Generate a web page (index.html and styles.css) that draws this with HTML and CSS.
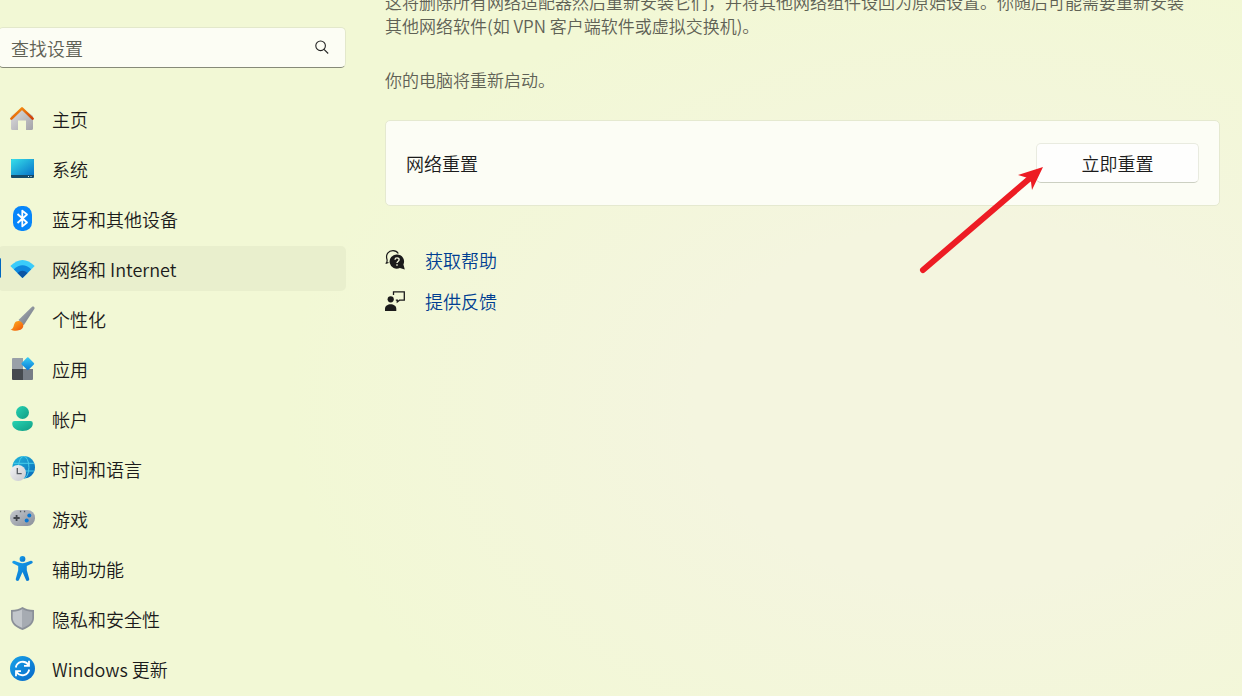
FILE: index.html
```html
<!DOCTYPE html>
<html lang="zh-CN">
<head>
<meta charset="utf-8">
<meta name="viewport" content="width=device-width, initial-scale=1">
<title>设置 - 网络重置</title>
<link rel="stylesheet" href="styles.css">
</head>
<body>
<div class="shell">
  <aside class="sidebar">
    <form class="search" role="search">
      <input class="search-input" type="text" placeholder="查找设置" aria-label="查找设置">
      <button class="search-button" type="button" aria-label="搜索">
        <svg width="16" height="16" viewBox="0 0 16 16" fill="none" stroke="#222" stroke-width="1.1"><circle cx="6.6" cy="6.8" r="4.8"/><path d="M10 10.300 14.200 14.500"/></svg>
      </button>
    </form>
    <nav class="nav" aria-label="设置">
      <a class="nav-item" href="#home">
        <svg class="nav-icon" viewBox="0 0 25 25">
          <defs><linearGradient id="wall" x1="0" y1="0" x2="1" y2="1"><stop offset="0" stop-color="#e0e0e2"/><stop offset="1" stop-color="#a3a3a8"/></linearGradient><linearGradient id="roof" x1="0" y1="0" x2="1" y2="1"><stop offset="0" stop-color="#fb9a10"/><stop offset="1" stop-color="#cf3f07"/></linearGradient></defs>
          <path fill="url(#wall)" d="M1 10 12 2l11 8v12.500a1.500 1.500 0 0 1-1.500 1.500H16v-9.500H8V24H2.500A1.500 1.500 0 0 1 1 22.500Z"/>
          <path fill="none" stroke="url(#roof)" stroke-width="2.600" stroke-linecap="round" stroke-linejoin="round" d="M1.400 12.600 12 2.400l10.600 10.200"/>
        </svg><span>主页</span></a>
      <a class="nav-item" href="#system">
        <svg class="nav-icon" viewBox="0 0 25 25">
          <defs><linearGradient id="screen" x1="0" y1="0" x2="1" y2="1"><stop offset="0" stop-color="#36e0ea"/><stop offset="1" stop-color="#0873c9"/></linearGradient></defs>
          <rect x="1" y="3" width="23" height="19" rx="1" fill="#134b6b"/><path d="M1 4a1 1 0 0 1 1-1h21a1 1 0 0 1 1 1v15H1Z" fill="url(#screen)"/><path d="M18 20.500h1M20.500 20.500h1" stroke="#d7ecf5"/>
        </svg><span>系统</span></a>
      <a class="nav-item" href="#bluetooth">
        <svg class="nav-icon" viewBox="0 0 25 25">
          <rect x="3" width="19" height="25" rx="8.500" fill="#0786fa"/><path fill="none" stroke="#fff" stroke-width="1.800" stroke-linejoin="round" d="m7.500 8 9.500 8.500-4.700 3.900V4.600L17 8.500 7.500 17"/>
        </svg><span>蓝牙和其他设备</span></a>
      <a class="nav-item active" href="#network" aria-current="page">
        <svg class="nav-icon" viewBox="0 0 25 25">
          <path fill="#3acbfa" d="M.300 10Q12.500-2 24.700 10L12.500 22Z"/><path fill="#0e87dd" d="M3.800 13.300q8.700-8 17.400 0L12.500 22Z"/><path fill="#0b55a4" d="M7.500 17q5-4.500 10 0l-5 5Z"/>
        </svg><span>网络和 Internet</span></a>
      <a class="nav-item" href="#personalization">
        <svg class="nav-icon" viewBox="0 0 25 25">
          <defs><linearGradient id="handle" x1="0" y1="0" x2="1" y2="1"><stop offset="0" stop-color="#abb1ba"/><stop offset="1" stop-color="#6d747e"/></linearGradient><linearGradient id="brush" x1="0" y1="0" x2="1" y2="1"><stop offset="0" stop-color="#ffb51f"/><stop offset="1" stop-color="#ef5208"/></linearGradient></defs>
          <path fill="url(#handle)" d="M8.500 14 21.800 1c1.500-1.200 3.500.200 2.500 2.100L13.700 19.200Z"/><path fill="url(#brush)" d="M4.500 17.500c1.500-3 5.400-3.200 7.800-.600 2.200 2.800.600 6.200-2.800 7.200-3 .900-6.600.700-9-.700 3.200-.300 2.800-3.400 4-5.900Z"/>
        </svg><span>个性化</span></a>
      <a class="nav-item" href="#apps">
        <svg class="nav-icon" viewBox="0 0 25 25">
          <defs><linearGradient id="tile" x1="0" y1="0" x2="1" y2="1"><stop offset="0" stop-color="#3ad0f6"/><stop offset="1" stop-color="#0878d6"/></linearGradient></defs>
          <path fill="#99a0a8" d="M3 2h10v11H2V3a1 1 0 0 1 1-1Z"/><path fill="#45494f" d="M2 13h11v11H3a1 1 0 0 1-1-1Z"/><path fill="#777d86" d="M13 13h10v10a1 1 0 0 1-1 1h-9Z"/><rect x="13" y="2.900" width="9.600" height="9.600" rx="1" transform="rotate(45 17.800 7.700)" fill="url(#tile)"/>
        </svg><span>应用</span></a>
      <a class="nav-item" href="#accounts">
        <svg class="nav-icon" viewBox="0 0 25 25">
          <defs><linearGradient id="person" x1="0" y1="0" x2="1" y2="1"><stop offset="0" stop-color="#27d3b3"/><stop offset="1" stop-color="#109c83"/></linearGradient></defs>
          <circle cx="12.500" cy="6.500" r="6.500" fill="url(#person)"/><path fill="url(#person)" d="M4.500 15h16a2.300 2.300 0 0 1 2.300 2.300C22.800 22 18.500 25 12.500 25S2.200 22 2.200 17.300A2.300 2.300 0 0 1 4.500 15Z"/>
        </svg><span>帐户</span></a>
      <a class="nav-item" href="#time">
        <svg class="nav-icon" viewBox="0 0 25 25">
          <defs><linearGradient id="globe" x1="0" y1="0" x2="1" y2="1"><stop offset="0" stop-color="#22b9dc"/><stop offset="1" stop-color="#0867b9"/></linearGradient><linearGradient id="dial" x1="0" y1="0" x2="1" y2="1"><stop offset="0" stop-color="#f5f5f7"/><stop offset="1" stop-color="#c6c8cd"/></linearGradient></defs>
          <circle cx="13.700" cy="11.300" r="11.300" fill="url(#globe)"/><g fill="none" stroke="#49cdea" stroke-width="1"><ellipse cx="13.700" cy="11.300" rx="5.200" ry="11"/><path d="M3.500 7.300h20.400M3.500 15h20.400"/></g><circle cx="8" cy="17" r="8" fill="url(#dial)"/><path fill="none" stroke="#555b62" stroke-width="1.300" d="M7.300 12v5.700h4.400"/>
        </svg><span>时间和语言</span></a>
      <a class="nav-item" href="#gaming">
        <svg class="nav-icon" viewBox="0 0 25 25">
          <defs><linearGradient id="pad" x1="0" y1="0" x2="1" y2="1"><stop offset="0" stop-color="#c5c8ce"/><stop offset="1" stop-color="#898f99"/></linearGradient></defs>
          <rect y="4" width="25" height="16" rx="7.500" fill="url(#pad)"/><path stroke="#42464c" stroke-width="1.800" d="M3.500 12h6.200M6.600 8.900v6.200"/><circle cx="19.300" cy="9.500" r="2" fill="#0876d3"/><circle cx="16.700" cy="14.500" r="2" fill="#0876d3"/><path stroke="#555b63" stroke-width="1.300" d="M9.900 5.500h1.300M13.900 5.500h1.300"/>
        </svg><span>游戏</span></a>
      <a class="nav-item" href="#accessibility">
        <svg class="nav-icon" viewBox="0 0 25 25">
          <defs><linearGradient id="figure" x1="0" y1="0" x2="1" y2="1"><stop offset="0" stop-color="#19a0ec"/><stop offset="1" stop-color="#0672cc"/></linearGradient></defs>
          <g fill="url(#figure)"><circle cx="12.500" cy="2.900" r="2.900"/><path d="M4.300 4.800 9 6.600q3.500 1.300 7 0l4.700-1.800c2-.500 2.800 2 1.100 2.800l-5 2.400v4.200l2.400 8.500c.500 2.200-2.500 3.100-3.300 1l-3.400-7.600-3.400 7.600c-.800 2.100-3.800 1.200-3.300-1l2.400-8.500V10l-5-2.400c-1.700-.800-.900-3.300 1.100-2.800Z"/></g>
        </svg><span>辅助功能</span></a>
      <a class="nav-item" href="#privacy">
        <svg class="nav-icon" viewBox="0 0 25 25">
          <path fill="#8b9098" d="M12.500 1c3 2 6.500 3 11.500 3v8c0 5.500-4.500 9.500-11.500 12C5.500 21.500 1 17.500 1 12V4c5 0 8.500-1 11.500-3Z"/><path fill="#c2c6cb" d="M12.500 3C9.500 4.800 6.500 5.600 2.700 5.800V12c0 4.300 3.600 7.600 9.800 10Z"/><path fill="#a6abb2" d="M12.500 3c3 1.800 6 2.600 9.800 2.800V12c0 4.300-3.600 7.600-9.800 10Z"/>
        </svg><span>隐私和安全性</span></a>
      <a class="nav-item" href="#update">
        <svg class="nav-icon" viewBox="0 0 25 25">
          <defs><linearGradient id="disc" x1="0" y1="0" x2="1" y2="1"><stop offset="0" stop-color="#18a3e8"/><stop offset="1" stop-color="#0868c9"/></linearGradient></defs>
          <circle cx="12.500" cy="12.500" r="12.500" fill="url(#disc)"/><path fill="none" stroke="#fff" stroke-width="1.800" d="M5.800 11.500a6.900 6.900 0 0 1 12.400-2.800M19.200 13.500a6.900 6.900 0 0 1-12.400 2.800M19 4.800v5h-5M6 20.200v-5h5"/>
        </svg><span>Windows 更新</span></a>
    </nav>
  </aside>
  <main class="content">
    <div class="description">
      <p>这将删除所有网络适配器然后重新安装它们，并将其他网络组件设回为原始设置。你随后可能需要重新安装<br>其他网络软件(如 VPN 客户端软件或虚拟交换机)。</p>
      <p>你的电脑将重新启动。</p>
    </div>
    <section class="card">
      <h2 class="card-title">网络重置</h2>
      <div class="card-action">
        <button class="reset-button" type="button">立即重置</button>
        <svg class="arrow" width="130" height="112" viewBox="0 0 130 112" fill="#ed1c24" aria-hidden="true"><path d="M8 106 114 15" stroke="#ed1c24" stroke-width="6" stroke-linecap="round"/><path d="M128 3 103 11 113 14 116 18 117 26Z"/></svg>
      </div>
    </section>
    <div class="links">
      <a class="link" href="#help">
        <svg class="link-icon" viewBox="0 0 20 20"><path fill="none" stroke="#1b1b1b" stroke-width="1.200" d="M1.500 13q.900-2 .500-3.500C.400 4.500 3.500.700 8 .700c2.200 0 4.200 1 5.300 2.800M3.500 12.500.600 13.400"/><path fill="#1b1b1b" d="M12 4.500a7 7 0 0 1 6.400 10l1.400 4.900-4.900-1.500A7.100 7.100 0 1 1 12 4.500Z"/><path fill="none" stroke="#f4f7dc" stroke-width="1.400" d="M10 9.700c.200-2.600 4.200-2.300 4.100 0 0 1.500-2.100 1.500-2.100 3.400M12 14.200v1.500"/></svg>
        <span>获取帮助</span></a>
      <a class="link" href="#feedback">
        <svg class="link-icon" viewBox="0 0 20 20"><circle cx="5.700" cy="8.300" r="3.100" fill="#1b1b1b"/><path fill="#1b1b1b" d="M0 20v-2.200c0-6.200 11.300-6.200 11.300 0V20Z"/><path fill="none" stroke="#1b1b1b" stroke-width="1.300" d="M8.500 4V.800h10.800v8.400h-4.800L12.300 11V9.200h-1.500"/></svg>
        <span>提供反馈</span></a>
    </div>
  </main>
</div>
</body>
</html>
```
FILE: styles.css
```css
* { box-sizing: border-box; }

body {
  margin: 0;
  min-height: 100vh;
  overflow: hidden;
  color: #1b1b1b;
  font-family: "Noto Sans CJK SC", "Noto Sans", sans-serif;
  font-size: 18px;
  font-weight: 350;
  line-height: 24px;
  background:
    radial-gradient(ellipse 55% 65% at 78% 58%, #f4f5df 0%, #f4f5df 40%, rgba(244, 245, 223, 0) 100%),
    #f2f8d5;
}

a { color: inherit; text-decoration: none; }

.shell { display: flex; gap: 39px; }

.sidebar {
  flex: 0 0 348px;
  margin-left: -2px;
  padding-top: 27px;
}

.search { position: relative; display: flex; }

.search-input {
  width: 100%;
  height: 41px;
  padding: 0 48px 0 12px;
  border: 1px solid #e3e8cb;
  border-bottom-color: #868a78;
  border-radius: 5px;
  background: #fcfdf4;
  color: #1b1b1b;
  font: inherit;
  outline: none;
}

.search-input::placeholder { color: #5f6155; opacity: 1; }

.search-button {
  position: absolute;
  top: 4px;
  right: 8px;
  display: grid;
  place-items: center;
  width: 32px;
  height: 32px;
  padding: 0;
  border: 0;
  background: transparent;
}

.nav {
  display: grid;
  gap: 5px;
  padding-top: 28px;
}

.nav-item {
  position: relative;
  display: flex;
  align-items: center;
  gap: 17px;
  height: 45px;
  padding: 0 12px;
  border-radius: 5px;
}

.nav-item.active { background: #e9efcd; }

.nav-item.active::before {
  content: "";
  position: absolute;
  top: 12px;
  left: 0;
  width: 3px;
  height: 20px;
  border-radius: 2px;
  background: #0067c0;
}

.nav-icon { flex: none; width: 25px; height: 25px; }

.content {
  flex: 1;
  min-width: 0;
  margin-top: -10px;
  padding-right: 22px;
}

.description {
  display: grid;
  gap: 30px;
  padding-bottom: 28px;
  color: #5f6155;
  font-size: 17px;
}

.description p { margin: 0; }

.card {
  display: flex;
  align-items: center;
  justify-content: space-between;
  min-height: 86px;
  padding: 20px;
  border: 1px solid #e5e9d0;
  border-radius: 5px;
  background: #fcfdf5;
}

.card-title { margin: 0; font-size: 18px; font-weight: 350; }

.card-action { position: relative; }

.reset-button {
  display: block;
  min-width: 163px;
  height: 40px;
  border: 1px solid #e9ebe0;
  border-bottom-color: #ccd0c2;
  border-radius: 5px;
  background: #fefefd;
  color: #1b1b1b;
  font: inherit;
}

.arrow {
  position: absolute;
  top: 21px;
  left: -121px;
  pointer-events: none;
}

.links {
  display: grid;
  justify-items: start;
  gap: 17px;
  padding-top: 42px;
}

.link {
  display: flex;
  align-items: center;
  gap: 20px;
  color: #003e92;
}

.link-icon { flex: none; width: 20px; height: 20px; }
```
